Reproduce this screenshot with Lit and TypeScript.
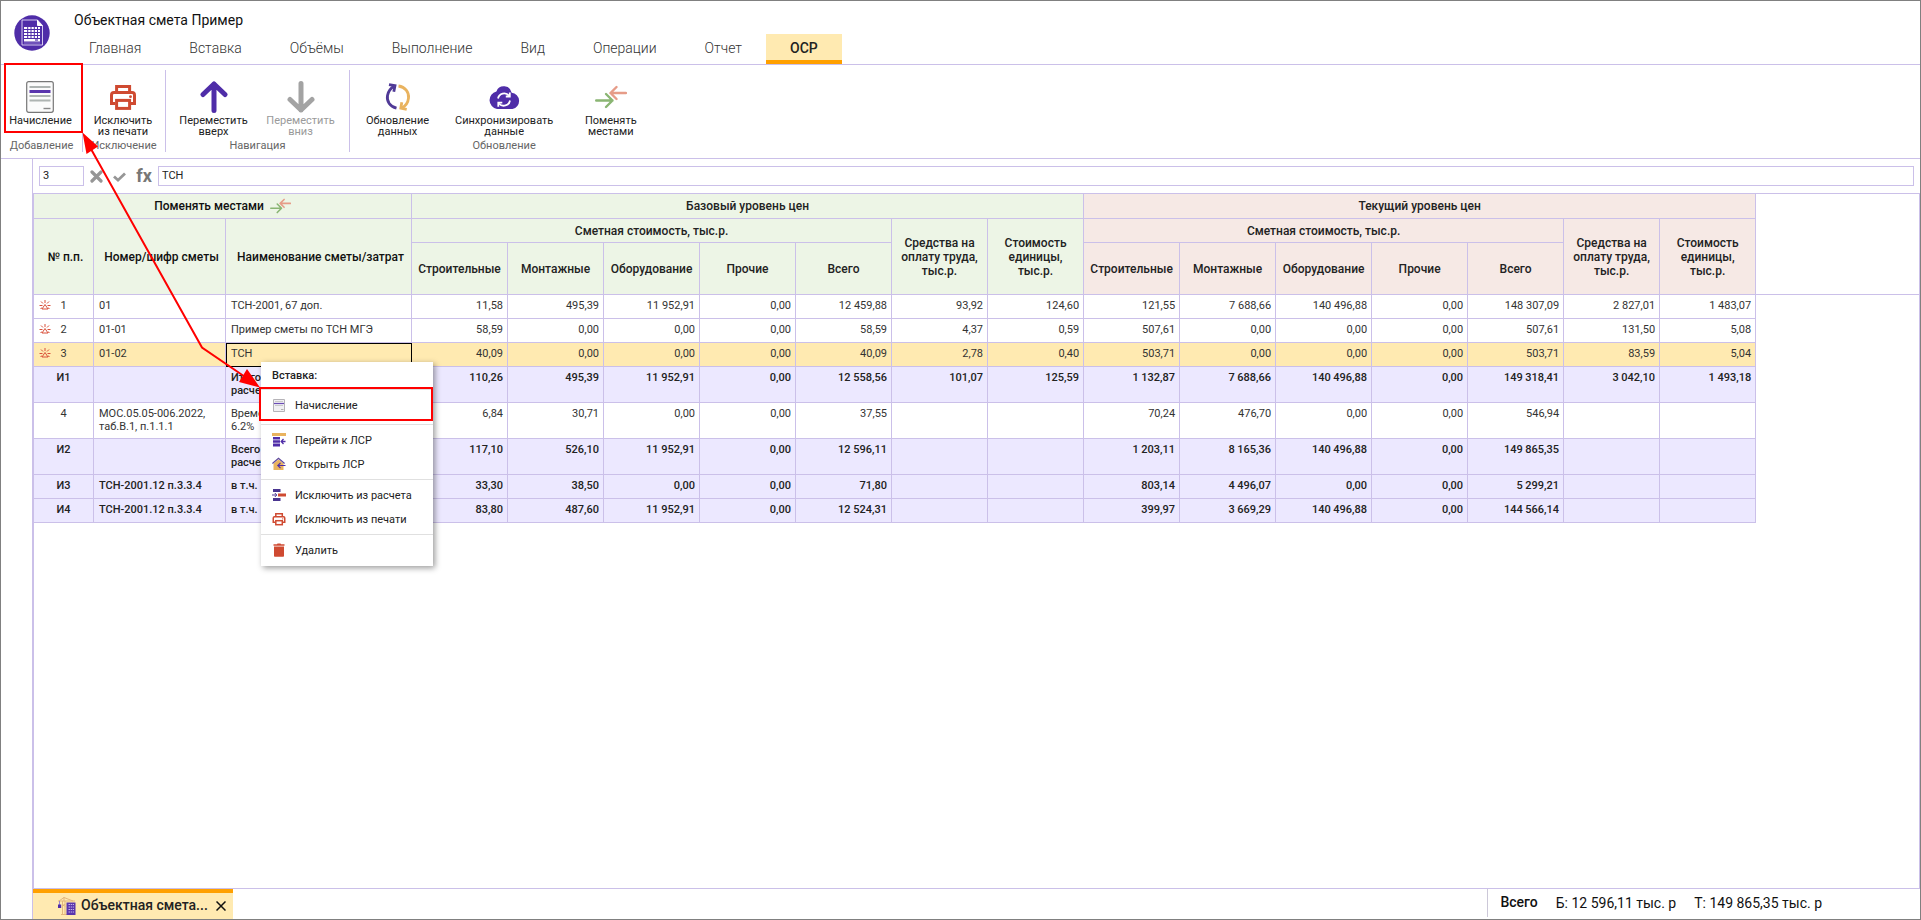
import { LitElement, html, css, svg, nothing } from "lit";
import { customElement } from "lit/decorators.js";
import { classMap } from "lit/directives/class-map.js";

interface Row {
  no: string;
  code: string;
  name: string;
  values: string[];
  kind?: "total" | "selected";
  warn?: boolean;
}

const ROWS: Row[] = [
  { no: "1", code: "01", name: "ТСН-2001, 67 доп.", warn: true,
    values: ["11,58", "495,39", "11 952,91", "0,00", "12 459,88", "93,92", "124,60", "121,55", "7 688,66", "140 496,88", "0,00", "148 307,09", "2 827,01", "1 483,07"] },
  { no: "2", code: "01-01", name: "Пример сметы по ТСН МГЭ", warn: true,
    values: ["58,59", "0,00", "0,00", "0,00", "58,59", "4,37", "0,59", "507,61", "0,00", "0,00", "0,00", "507,61", "131,50", "5,08"] },
  { no: "3", code: "01-02", name: "ТСН", warn: true, kind: "selected",
    values: ["40,09", "0,00", "0,00", "0,00", "40,09", "2,78", "0,40", "503,71", "0,00", "0,00", "0,00", "503,71", "83,59", "5,04"] },
  { no: "И1", code: "", name: "Итого\nрасчету", kind: "total",
    values: ["110,26", "495,39", "11 952,91", "0,00", "12 558,56", "101,07", "125,59", "1 132,87", "7 688,66", "140 496,88", "0,00", "149 318,41", "3 042,10", "1 493,18"] },
  { no: "4", code: "МОС.05.05-006.2022, таб.В.1, п.1.1.1", name: "Временные\n6.2%",
    values: ["6,84", "30,71", "0,00", "0,00", "37,55", "", "", "70,24", "476,70", "0,00", "0,00", "546,94", "", ""] },
  { no: "И2", code: "", name: "Всего\nрасчету", kind: "total",
    values: ["117,10", "526,10", "11 952,91", "0,00", "12 596,11", "", "", "1 203,11", "8 165,36", "140 496,88", "0,00", "149 865,35", "", ""] },
  { no: "И3", code: "ТСН-2001.12 п.3.3.4", name: "в т.ч.", kind: "total",
    values: ["33,30", "38,50", "0,00", "0,00", "71,80", "", "", "803,14", "4 496,07", "0,00", "0,00", "5 299,21", "", ""] },
  { no: "И4", code: "ТСН-2001.12 п.3.3.4", name: "в т.ч.", kind: "total",
    values: ["83,80", "487,60", "11 952,91", "0,00", "12 524,31", "", "", "399,97", "3 669,29", "140 496,88", "0,00", "144 566,14", "", ""] },
];

const TABS = ["Главная", "Вставка", "Объёмы", "Выполнение", "Вид", "Операции", "Отчет", "ОСР"];

const printer = (size: number) => html`<svg width=${size} height=${size} viewBox="0 0 28 28" aria-hidden="true">
  <g fill="none" stroke="#cf4a31" stroke-width="3">
    <path d="M7.6 8.5V3.6h13v4.9" /><path d="M6.400 20.400H2.500V12q0-2.500 2.500-2.500h18q2.500 0 2.500 2.500v8.400h-3.900" />
    <rect x="7.600" y="17.400" width="13" height="8" /></g>
  <circle cx="21.500" cy="13.700" r="1.400" fill="#cf4a31" /></svg>`;

const sheet = (size: number) => html`<svg width=${size} height=${size} viewBox="0 0 32 32" aria-hidden="true">
  <rect x="2.700" y=".7" width="26.600" height="30.600" rx="2" fill="#fbfbfb" stroke="#777" stroke-width="1.200" />
  <path d="M5.500 6h21M5.500 15h21M5.500 19.500h21" stroke="#aeb4b2" stroke-width="1.800" />
  <path d="M5.500 10.500h21" stroke="#5a35ad" stroke-width="3" />
  <path d="M19.500 27.500h7" stroke="#888" stroke-width="1.400" /></svg>`;

const smallSheet = html`<svg width="14" height="14" viewBox="0 0 14 14" aria-hidden="true">
  <path d="M1.500 1.500h11v12h-11z" fill="#f1f0f3" stroke="#b5b3b8" />
  <path d="M3 3.500h8M3 7.500h8" stroke="#c9c9c9" /><path d="M2 5.500h10" stroke="#6a4bb5" stroke-width="1.200" />
  <path d="M9 11.500h2.500" stroke="#b0b0b0" /></svg>`;

const swap = (w: number, h: number) => html`<svg width=${w} height=${h} viewBox="0 0 32 24" aria-hidden="true">
  <g fill="none" stroke-width="2.400" stroke-linecap="round" stroke-linejoin="round">
    <path d="M31 8H15.500M21.500 2l-6 6 6 6" stroke="#e69c88" />
    <path d="M1.200 15.500H17.500M11 9l6.500 6.500-6.500 6.500" stroke="#8ab573" /></g></svg>`;

const arrow = (color: string, down: boolean) => html`<svg width="28" height="32" viewBox="0 0 28 32" aria-hidden="true">
  <path d=${down ? "M14 2.500V29M3 18.500 14 29l11-10.500" : "M14 29.500V3M3 13.500 14 3l11 10.500"} fill="none"
    stroke=${color} stroke-width="5" stroke-linecap="round" stroke-linejoin="round" /></svg>`;

const refresh = html`<svg width="28" height="32" viewBox="0 0 28 32" aria-hidden="true">
  <g fill="none" stroke-width="2.800">
    <path d="M12.500 27.200C6 25.500 2.500 20.500 3.500 14.500 4.300 10 7 7 10 5.200" stroke="#503a97" />
    <path d="M5 3.600 11 4.700 9.800 10.800" stroke="#503a97" stroke-width="2.800" />
    <path d="M14.500 5C21 6 25.300 11 24.500 17.200 24 22 21.500 25 18 27" stroke="#e9b35f" />
    <path d="M22.700 28.400 16.800 27.200 17.800 21.200" stroke="#e9b35f" stroke-width="2.800" /></g></svg>`;

const cloud = html`<svg width="32" height="32" viewBox="0 0 32 32" aria-hidden="true">
  <path fill="#4f2da8" d="M9 28a9 9 0 0 1-.6-17.600A8 8 0 0 1 23.700 11.800 8.200 8.200 0 0 1 24.500 28z" />
  <g fill="none" stroke="#fff" stroke-width="1.800"><path d="M10 17.500A6.300 6.300 0 0 1 21 14.700M22 19.500A6.300 6.300 0 0 1 11 22.500" />
  <path d="M21.800 11.500v4h-4M10.300 25.700v-4h4" /></g></svg>`;

const warning = html`<svg class="warn" width="12" height="12" viewBox="0 0 12 12" aria-label="Предупреждение">
  <g fill="none" stroke="#d9503a" stroke-width="1"><path d="M3 10 6 5.500 9 10zM.500 6.500h3M8.500 6.500h3M6 1v3M2 2.500l2 2M10 2.500l-2 2M1.500 9.500l1.500-.5M10.500 9.500 9 9" /></g></svg>`;

const logo = html`<svg width="36" height="36" viewBox="0 0 36 36" aria-hidden="true">
  <circle cx="18" cy="18" r="17.700" fill="#4f2da8" />
  <path d="M8 5h15.500l5 5.500V30H8z" fill="#4f2da8" stroke="#d6cbef" stroke-width="1" />
  <path d="M23.500 5v5.500h5" fill="#fff" stroke="#fff" />
  <path d="M10 12h16v14.500H10z" fill="#fff" /><path d="M13.700 12v11.500M17 12v11.500M20.300 12v11.500M23.500 12v11.500M10 14.500h16M10 17.500h16M10 20.500h16M10 23.500h16" stroke="#4f2da8" stroke-width="1" />
  <path d="M21 25h3" stroke="#4f2da8" stroke-width="1.200" /><path d="M10 28h16" stroke="#8f78cc" /></svg>`;

const gotoIcon = html`<svg width="14" height="14" viewBox="0 0 14 14" aria-hidden="true"><path d="M0 0h14v3H0z" fill="#e9b35f" />
  <path d="M1 4h7v2.500H1zM1 7.300h7v2.500H1zM1 10.600h7v2.800H1z" fill="#4f2da8" />
  <path d="M13.500 8.500H9.500M11.500 6l-2.300 2.500 2.300 2.500" fill="none" stroke="#4f2da8" stroke-width="1.300" /></svg>`;
const homeIcon = html`<svg width="14" height="14" viewBox="0 0 14 14" aria-hidden="true"><path d="M1.500 6.500 6.500 2.500l5 4V13h-10z" fill="#e9b35f" />
  <path d="M.4 6.500 6.500 1.200 12.600 6.500" fill="none" stroke="#5d479c" stroke-width="1.200" />
  <path d="M13.500 8.500H6M8.500 5.800 5.800 8.500l2.700 2.700" fill="none" stroke="#4f2da8" stroke-width="1.200" /></svg>`;
const excludeIcon = html`<svg width="14" height="14" viewBox="0 0 14 14" aria-hidden="true"><path d="M1 1h7.500v3H1zM1 10h7.500v3H1z" fill="#4a3590" />
  <path d="M6 5.500h8v3H6z" fill="#cf4a31" /><path d="M0 7h4.500M2.800 5 4.800 7l-2 2" fill="none" stroke="#4a3590" /></svg>`;
const trashIcon = html`<svg width="14" height="14" viewBox="0 0 14 14" aria-hidden="true"><path d="M1.500 1.200H5L5.500.4h3l.5.8h3.500v1.600h-11zM2 3.600h10V13q0 .8-.8.8H2.800q-.8 0-.8-.8z" fill="#cf4a31" /></svg>`;
const crane = html`<svg width="20" height="20" viewBox="0 0 20 20" aria-hidden="true">
  <path d="M5.500 19V5M8 19V5M1 5h17M2 5l5-3.500L16 5M7 1v4M5.500 8 8 10.500M8 8 5.500 10.500M4 18.500h6" fill="none" stroke="#e3b77d" />
  <path d="M2.500 5v4" stroke="#9b83cf" /><path d="M1 8.500h3.200v3.500H1z" fill="#4f2da8" /><path d="M9.500 6.500h9V19h-9z" fill="#5a35ad" />
  <path d="M11.500 8.500h5.500M11.500 11h5.500M11.500 13.500h5.500M11.500 16h5.500" stroke="#c4b5e8" stroke-dasharray="1.500 .7" /></svg>`;

@customElement("app-root")
export class AppRoot extends LitElement {
  static styles = css`
    :host { display: block; font-family: Roboto, "Liberation Sans", sans-serif; font-size: 11px; color: #222; --line: #cbc0e9; --violet: #4f2da8; --amber: #ffeab1; }
    * { box-sizing: border-box; }
    button { font: inherit; color: inherit; border: 0; margin: 0; background: none; cursor: pointer; }
    .app { position: relative; display: grid; grid-template-rows: auto auto 1fr; min-height: 100vh; border: 1px solid #808080; background: #fff; }

    .head { display: flex; border-bottom: 1px solid var(--line); }
    .logo { padding: 14px 0 0 13px; width: 64px; }
    .title { margin: 0; padding: 9px 0 0 9px; height: 33px; font-size: 14px; line-height: 20px; font-weight: 400; color: #111; }
    .tabs { display: flex; }
    .tab { height: 30px; padding: 2px 24px 0; border-bottom: 4px solid transparent; font-size: 14px; line-height: 24px; font-weight: 300; color: #333; }
    .tab.active { background: var(--amber); border-color: #ffa000; font-weight: 500; color: #222; }

    .ribbon { display: flex; padding: 5px 0 6px; border-bottom: 1px solid var(--line); }
    .group { display: flex; flex-direction: column; align-items: center; justify-content: space-between; min-width: 83px; min-height: 82px; border-right: 1px solid var(--line); }
    .group:first-child { min-width: 82px; }
    .group:last-child { border: 0; }
    .tools { display: flex; padding: 0 5px 0 4px; }
    .group:first-child .tools, .group:nth-child(2) .tools { padding: 0 2px 0 0; }
    .group:last-child .tools { padding: 0; }
    .tool { display: flex; flex-direction: column; align-items: center; gap: 2px; padding: 11px 8px 0; line-height: 11px; min-width: 78px; }
    .group:nth-child(3) .tool { min-width: 87px; }
    .group:last-child .tool { min-width: 95px; padding: 11px 10px 0; }
    .tool svg { height: 32px; }
    .tool:disabled { color: #9a9a9a; cursor: default; }
    .label { white-space: pre-line; text-align: center; }
    .caption { line-height: 12px; color: #666; }

    .body { display: grid; grid-template-columns: 31px minmax(0, 1fr); }
    .work { display: grid; grid-template-rows: auto 1fr auto; border-left: 1px solid var(--line); }
    .formula { display: flex; align-items: center; gap: 6px; padding: 7px 6px; height: 35px; border-bottom: 1px solid var(--line); }
    .formula input { height: 20px; border: 1px solid var(--line); padding: 0 3px 2px; font: inherit; color: #222; background: #fff; outline: 0; }
    .cellref { width: 45px; }
    .expression { flex: 1; min-width: 0; }
    .act { display: flex; padding: 0; width: 13px; margin-right: 4px; }
    .fx { padding: 0; width: 16px; font-size: 18px; line-height: 20px; font-weight: 700; color: #777; }

    .sheet { position: relative; border: 1px solid var(--line); border-top: 0; }
    table { width: 100%; table-layout: fixed; border-collapse: separate; border-spacing: 0; }
    .c-no { width: 60px; } .c-code { width: 132px; } .c-name { width: 186px; } .c-num { width: 96px; }
    th, td { padding: 0 4px; border-right: 1px solid var(--line); border-bottom: 1px solid var(--line); }
    th { font-size: 12px; line-height: 14px; font-weight: 500; background: #edf5e6; white-space: pre-line; }
    th.current { background: #f6e9e5; }
    th.own { padding-left: 8px; white-space: nowrap; }
    th.own, th.lead { color: #111; }
    th.blank, td.blank { background: #fff; border-right: 0; }
    td.blank { border-bottom: 0; }
    .r1 { height: 25px; } .r2 { height: 24px; } .r3 { height: 52px; }
    .swap { display: inline-flex; align-items: center; gap: 6px; padding: 0; }
    td { height: 24px; padding-top: 4px; padding-bottom: 5px; vertical-align: top; line-height: 13px; color: #333; }
    .no { position: relative; text-align: center; }
    .warn { position: absolute; left: 5px; top: 4px; }
    .text { padding-left: 5px; white-space: pre-line; }
    .num { text-align: right; white-space: nowrap; }
    .selected td:not(.blank) { background: var(--amber); }
    .selected td.name { outline: 1px solid #000; outline-offset: -1px; }
    .total td:not(.blank) { background: #ece8ff; font-weight: 500; color: #222; }

    .foot { display: flex; justify-content: space-between; height: 30px; }
    .doc { display: flex; align-items: center; width: 200px; height: 30px; padding: 0 7px 0 24px; border-top: 4px solid #ffa000; background: var(--amber); font-size: 14px; font-weight: 500; line-height: 20px; }
    .doc svg { flex: none; }
    .doc button { display: flex; padding: 0; margin-left: auto; }
    .doc span { margin-left: 4px; padding-bottom: 3px; }
    .sums { display: flex; gap: 18px; height: 28px; padding: 0 98px 0 12px; border-left: 1px solid #ccc8d8; font-size: 14px; line-height: 28px; color: #111; }
    .sums strong { font-weight: 500; line-height: 27px; }

    .menu { position: absolute; left: 227px; top: 168px; width: 172px; margin: 0; padding: 0 0 1px; background: #fff; box-shadow: 2px 2px 6px #0006; }
    .menu h2 { margin: 0; padding: 0 11px; font-size: 11px; line-height: 27px; font-weight: 500; }
    .section { padding: 3px 0; border-top: 1px solid #e0e0e0; }
    .section.first { padding-bottom: 7px; }
    .item { display: flex; align-items: center; gap: 9px; width: 100%; height: 24px; padding: 0 11px; text-align: left; white-space: nowrap; }
    .item svg { flex: none; }

    .notes { position: absolute; left: 0; top: 0; pointer-events: none; }
  `;

  private tool(icon: unknown, label: string, disabled = false) {
    return html`<button class="tool" ?disabled=${disabled}>${icon}<span class="label">${label}</span></button>`;
  }

  private item(icon: unknown, label: string) {
    return html`<button class="item" role="menuitem">${icon}<span>${label}</span></button>`;
  }

  private levelHead(current: boolean) {
    const c = classMap({ current });
    return html`<th class=${c} colspan="5">Сметная стоимость, тыс.р.</th>
      <th class=${c} rowspan="2">Средства на оплату труда, тыс.р.</th>
      <th class=${c} rowspan="2">Стоимость единицы,\nтыс.р.</th>`;
  }

  private costHead(current: boolean) {
    return ["Строительные", "Монтажные", "Оборудование", "Прочие", "Всего"].map(
      (t) => html`<th class=${classMap({ current })}>${t}</th>`);
  }

  private row(r: Row) {
    return html`<tr class=${r.kind ?? ""}>
      <td class="no">${r.warn ? warning : nothing}${r.no}</td>
      <td class="text">${r.code}</td>
      <td class="text name">${r.name}</td>
      ${r.values.map((v) => html`<td class="num">${v}</td>`)}
      <td class="blank"></td></tr>`;
  }

  render() {
    return html`<div class="app">
      <header class="head">
        <div class="logo">${logo}</div>
        <div>
          <h1 class="title">Объектная смета Пример</h1>
          <nav class="tabs">${TABS.map((t) => html`<button class=${classMap({ tab: true, active: t === "ОСР" })}>${t}</button>`)}</nav>
        </div>
      </header>

      <section class="ribbon">
        <div class="group"><div class="tools">${this.tool(sheet(32), "Начисление")}</div><span class="caption">Добавление</span></div>
        <div class="group"><div class="tools">${this.tool(printer(28), "Исключить\nиз печати")}</div><span class="caption">Исключение</span></div>
        <div class="group"><div class="tools">
          ${this.tool(arrow("#4f2da8", false), "Переместить\nвверх")}
          ${this.tool(arrow("#a3a3a3", true), "Переместить\nвниз", true)}
        </div><span class="caption">Навигация</span></div>
        <div class="group"><div class="tools">
          ${this.tool(refresh, "Обновление\nданных")}
          ${this.tool(cloud, "Синхронизировать\nданные")}
          ${this.tool(swap(32, 24), "Поменять\nместами")}
        </div><span class="caption">Обновление</span></div>
      </section>

      <main class="body">
        <div></div>
        <div class="work">
          <div class="formula">
            <input class="cellref" aria-label="Номер строки" .value=${"3"} />
            <button class="act" aria-label="Отменить"><svg width="13" height="13" viewBox="0 0 13 13"><path d="M2 2l9 9M11 2l-9 9" stroke="#969696" stroke-width="3.200" stroke-linecap="round" /></svg></button>
            <button class="act" aria-label="Принять"><svg width="13" height="13" viewBox="0 0 13 13"><path d="M1 6.500l4 3.700L12 3.500" fill="none" stroke="#969696" stroke-width="2.800" /></svg></button>
            <button class="fx">fx</button>
            <input class="expression" aria-label="Значение" .value=${"ТСН"} />
          </div>

          <div class="sheet">
            <table>
              <colgroup>
                <col class="c-no" /><col class="c-code" /><col class="c-name" />
                ${ROWS[0].values.map(() => html`<col class="c-num" />`)}<col />
              </colgroup>
              <thead>
                <tr class="r1">
                  <th class="lead" colspan="3"><button class="swap">Поменять местами ${swap(21, 16)}</button></th>
                  <th colspan="7">Базовый уровень цен</th>
                  <th class="current" colspan="7">Текущий уровень цен</th>
                  <th class="blank" rowspan="3"></th>
                </tr>
                <tr class="r2">
                  <th class="own" rowspan="2">№ п.п.</th>
                  <th class="own" rowspan="2">Номер/шифр сметы</th>
                  <th class="own" rowspan="2">Наименование сметы/затрат</th>
                  ${this.levelHead(false)}${this.levelHead(true)}
                </tr>
                <tr class="r3">${this.costHead(false)}${this.costHead(true)}</tr>
              </thead>
              <tbody>${ROWS.map((r) => this.row(r))}</tbody>
            </table>

            <div class="menu" role="menu">
              <h2>Вставка:</h2>
              <div class="section first">${this.item(smallSheet, "Начисление")}</div>
              <div class="section">${this.item(gotoIcon, "Перейти к ЛСР")}${this.item(homeIcon, "Открыть ЛСР")}</div>
              <div class="section">${this.item(excludeIcon, "Исключить из расчета")}${this.item(printer(14), "Исключить из печати")}</div>
              <div class="section">${this.item(trashIcon, "Удалить")}</div>
            </div>
          </div>

          <footer class="foot">
            <div class="doc">${crane}<span>Объектная смета...</span>
              <button aria-label="Закрыть"><svg width="10" height="10" viewBox="0 0 10 10"><path d="M.5.5l9 9M9.500.5l-9 9" stroke="#111" stroke-width="1.500" /></svg></button></div>
            <div class="sums"><strong>Всего</strong><span>Б: 12 596,11 тыс. р</span><span>Т: 149 865,35 тыс. р</span></div>
          </footer>
        </div>
      </main>

      <svg class="notes" width="440" height="430" viewBox="1 1 440 430" aria-hidden="true">
        ${svg`<g fill="none" stroke="#f00" stroke-width="2"><rect x="5" y="64" width="77" height="68" /><rect x="260" y="388" width="172" height="32" />
        <path d="M91 149 202 347.500l41 28" /></g>
        <path d="M82.500 132.500 86.500 154l11.500-7.500zM260 387.500 239 382l8-13z" fill="#f00" />`}
      </svg>
    </div>`;
  }
}
